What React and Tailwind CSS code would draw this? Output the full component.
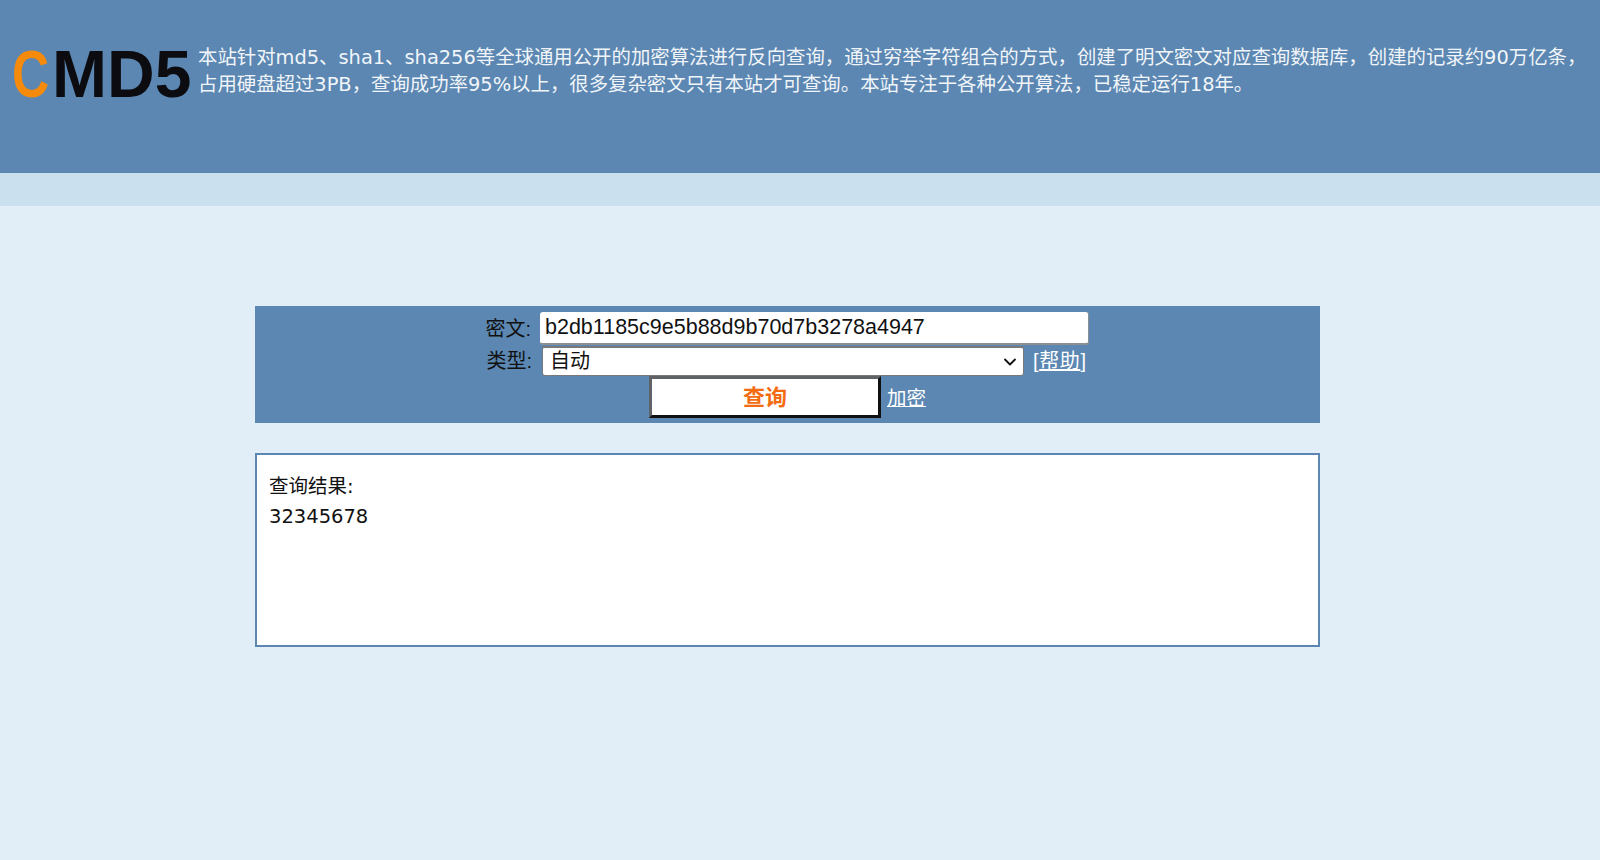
import React from "react";
import { ChevronDown } from "lucide-react";

const cjk = "font-['Liberation_Sans','Noto_Sans_CJK_SC',sans-serif]";

export default function App() {
  return (
    <div className={`min-h-[860px] bg-[#e1eef7] ${cjk}`}>
      <header className="h-[173px] bg-[#5b87b2] flex items-start pt-[44px] pl-[12px]">
        <div className="w-[186px] shrink-0 h-[60px] flex items-center font-bold text-[66px] leading-none text-[#0c0c10] blur-[0.5px]">
          <span className="inline-block w-[40px] origin-left scale-x-[0.78] text-[#f58a0b]">C</span>
          <span>MD5</span>
        </div>
        <p className="w-[1392px] font-['DejaVu_Sans','Noto_Sans_CJK_SC',sans-serif] text-[19.4px] leading-[27px] text-[#f1f5f9]">
          本站针对md5、sha1、sha256等全球通用公开的加密算法进行反向查询，通过穷举字符组合的方式，创建了明文密文对应查询数据库，创建的记录约90万亿条，占用硬盘超过3PB，查询成功率95%以上，很多复杂密文只有本站才可查询。本站专注于各种公开算法，已稳定运行18年。
        </p>
      </header>
      <div className="h-[33px] bg-[#cbe0ef]" />

      <main className="pl-[255px] pt-[100px]">
        <form className="w-[1065px] h-[117px] bg-[#5b87b2] pt-[6px]">
          <div className="flex items-center h-[33px]">
            <label className="w-[276px] text-right text-[20px] text-[#111]">密文:</label>
            <input
              readOnly
              value="b2db1185c9e5b88d9b70d7b3278a4947"
              className="ml-[9px] w-[549px] h-[33px] bg-white rounded-[3px] border-b-2 border-r border-[#8a8f94] px-[5px] text-[21.5px] text-[#111] outline-none"
            />
          </div>
          <div className="flex items-center h-[30px] mt-[1px]">
            <label className="w-[277px] text-right text-[20px] text-[#111]">类型:</label>
            <div className="ml-[10px] w-[482px] h-[30px] bg-white rounded-[3px] border border-[#77797c] border-t-2 flex items-center justify-between pl-[7px] pr-[3px] text-[20px] leading-[24px] text-[#111]">
              <span className="-mt-[2px]">自动</span>
              <ChevronDown size={20} strokeWidth={2.2} />
            </div>
            <span className="ml-[9px] text-[20px] tracking-[0.6px] text-white">
              [<a className="underline">帮助</a>]
            </span>
          </div>
          <div className="flex items-center">
            <button
              type="button"
              className="ml-[394px] w-[232px] h-[42px] bg-white border-[3px] border-t-[#5f6367] border-l-[#5f6367] border-r-[#111] border-b-[#111] text-[22px] font-bold text-[#f46c12]"
            >
              查询
            </button>
            <a className="ml-[6px] mt-[3px] text-[19.5px] text-white underline">加密</a>
          </div>
        </form>

        <section className="w-[1065px] h-[194px] mt-[30px] bg-white border-2 border-[#5b87b2] pt-[17px] pl-[12px] font-['DejaVu_Sans','Noto_Sans_CJK_SC',sans-serif] text-[19.5px] leading-[30px] text-[#111]">
          <div>查询结果:</div>
          <div>32345678</div>
        </section>
      </main>
    </div>
  );
}
